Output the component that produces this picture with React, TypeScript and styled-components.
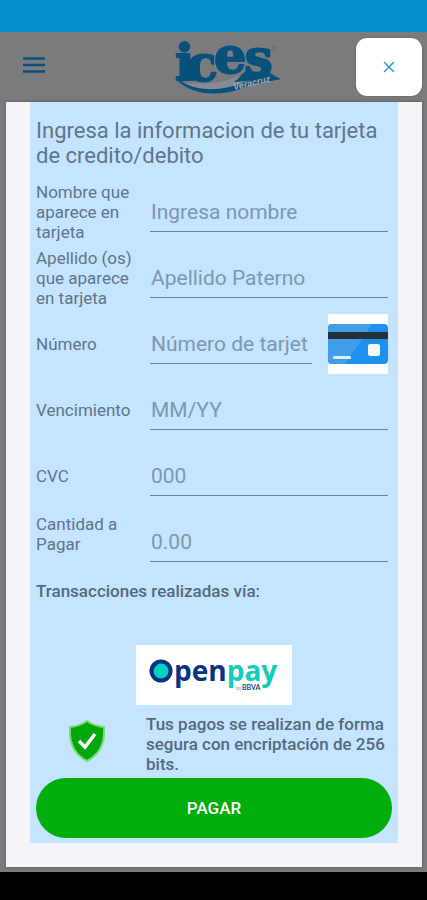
import React from "react";
import styled, { createGlobalStyle } from "styled-components";

const GlobalStyle = createGlobalStyle`
  * { box-sizing: border-box; }
  body { margin: 0; background: #000; font-family: Roboto, "Liberation Sans", sans-serif; }
`;

const Screen = styled.div`
  min-height: 100vh;
  display: flex;
  flex-direction: column;
`;

const StatusBar = styled.div`
  height: 32px;
  background: #048ccb;
`;

const Backdrop = styled.main`
  flex: 1;
  background: #7b7b7d;
  padding: 0 5px 5px 6px;
`;

const Header = styled.header`
  height: 70px;
  display: grid;
  grid-template-columns: 1fr auto 1fr;
  align-items: center;
`;

const MenuButton = styled.button`
  justify-self: start;
  margin: 0 0 4px 13px;
  padding: 4px;
  border: 0;
  background: none;
  display: flex;
`;

const Brand = styled.div`
  padding-left: 28px;
  display: flex;
`;

const CloseButton = styled.button`
  justify-self: end;
  width: 66px;
  height: 58px;
  padding: 0;
  border: 0;
  border-radius: 11px;
  background: #fff;
  box-shadow: 0 0 2px #555;
  display: flex;
  align-items: center;
  justify-content: center;
`;

const Modal = styled.section`
  padding: 0 24px 24px;
  background: #f4f4f9;
  box-shadow: 0 0 3px #555;
`;

const Form = styled.form`
  padding: 16px 6px 5px;
  background: #c5e4ff;
  color: #5f7588;
`;

const Title = styled.h1`
  margin: 0 0 11px;
  font-size: 22px;
  line-height: 25px;
  font-weight: 400;
`;

const Row = styled.div`
  min-height: 66px;
  padding-right: 4px;
  display: grid;
  grid-template-columns: 114px 1fr auto;
  align-items: center;
`;

const Label = styled.label<{ $top?: boolean }>`
  padding: ${(p) => (p.$top ? "5px 16px 0 0" : "0 16px 0 0")};
  align-self: ${(p) => (p.$top ? "start" : "center")};
  font-size: 17px;
  line-height: 20px;
`;

const Input = styled.input`
  width: 100%;
  min-width: 0;
  height: 40px;
  padding: 1px 0 0 1px;
  border: 0;
  border-bottom: 1px solid #6d8495;
  border-radius: 0;
  outline: 0;
  background: transparent;
  color: #455a6b;
  font: 400 21px Roboto, "Liberation Sans", sans-serif;
  &::placeholder { color: #7d97ac; opacity: 1; }
`;

const CardPicture = styled.div`
  margin-left: 16px;
  width: 60px;
  height: 60px;
  background: #fff;
  display: flex;
  align-items: center;
`;

const Note = styled.p`
  margin: 0;
  font-size: 17px;
  line-height: 20px;
  font-weight: 500;
  color: #536a7c;
`;

const Transactions = styled.div`
  padding-top: 6px;
`;

const Provider = styled.div`
  width: 156px;
  height: 60px;
  margin: 44px auto 9px;
  background: #fff;
`;

const Security = styled.div`
  display: grid;
  grid-template-columns: 102px 1fr;
  column-gap: 8px;
  align-items: center;
  margin-bottom: 4px;
`;

const Shield = styled.div`
  display: flex;
  justify-content: center;
  padding-bottom: 6px;
`;

const PayButton = styled.button`
  width: 100%;
  height: 60px;
  border: 0;
  border-radius: 30px;
  background: #02ae0e;
  color: #fff;
  font: 500 17px Roboto, "Liberation Sans", sans-serif;
`;

const NavigationBar = styled.div`
  height: 28px;
  background: #000;
`;

function IcesLogo() {
  return (
    <svg width="108" height="60" viewBox="0 0 108 60" overflow="visible" role="img" aria-label="ices Veracruz">
      <path d="M2 42C16 58 44 60 66 52C82 46 92 45 107 42C98 37 89 36 82 37L72 34L62 42C48 50 24 52 2 42Z" fill="#07517b" />
      <path d="M8 45C26 48 47 47 62 40C78 37 88 42 70 45C50 54 26 55 8 45Z" fill="#838c94" />
      <path d="M60 45L72 35L81 39L96 36L106 42L82 43Z" fill="#07517b" />
      <text x="1 13 40 70" y="43 44 36 38" fontSize="51" fill="#07517b" fontFamily="DejaVu Serif" fontWeight="700" stroke="#07517b" strokeWidth="2" strokeLinejoin="round">ices</text>
      <path d="M43 12C39 20 40 32 46 39M73 13C71 17 71 22 73 25" fill="none" stroke="#7b8790" strokeWidth="1" />
      <text x="60" y="53" transform="rotate(-13 60 53)" fontFamily="Liberation Sans" fontStyle="italic" fontWeight="700" fontSize="9" fill="#a3a8ad">Veracruz</text>
      <text x="98" y="13" fontFamily="Liberation Sans" fontSize="6" fill="#51616e">®</text>
    </svg>
  );
}

function CardIcon() {
  return (
    <svg width="60" height="40" viewBox="0 0 60 40" aria-hidden="true">
      <rect width="60" height="40" rx="4" fill="#1e90ef" />
      <path d="M4 0H44L17 40H4Q0 40 0 36V4Q0 0 4 0Z" fill="#429deb" />
      <path d="M0 8H60V15H0Z" fill="#263137" />
      <rect x="40" y="20" width="12" height="12" rx="2" fill="#f4f7f9" />
      <rect x="5" y="32" width="18" height="3" rx="1" fill="#dcedfb" />
    </svg>
  );
}

function OpenpayLogo() {
  return (
    <svg width="156" height="60" viewBox="0 0 156 60" role="img" aria-label="Openpay by BBVA">
      <circle cx="25" cy="26" r="9.5" fill="#05cec4" stroke="#073481" strokeWidth="4" />
      <path d="M16 20Q19 15 25 16L18 23Z" fill="#073481" />
      <text x="38" y="36" fontFamily="Open Sans" fontSize="28" fontWeight="700" fill="#073481">
        pen<tspan fill="#13cdb8">pay</tspan>
      </text>
      <text x="100" y="45" fontFamily="Lato" fontSize="5" fill="#8390ac">by</text>
      <text x="106" y="45" fontFamily="Lato" fontSize="7" fontWeight="700" fill="#234778">BBVA</text>
    </svg>
  );
}

function ShieldIcon() {
  return (
    <svg width="36" height="42" viewBox="0 0 36 42" aria-hidden="true">
      <path d="M18 1Q25 6 35 7Q37 31 18 41Q-1 31 1 7Q11 6 18 1Z" fill="#02a80b" stroke="#83d878" strokeWidth="2" />
      <path d="M10 21L16 27L26 14" fill="none" stroke="#fff" strokeWidth="3.5" />
    </svg>
  );
}

type FieldProps = {
  id: string;
  label: string;
  placeholder: string;
  top?: boolean;
  children?: React.ReactNode;
};

function Field({ id, label, placeholder, top, children }: FieldProps) {
  return (
    <Row>
      <Label htmlFor={id} $top={top}>{label}</Label>
      <Input id={id} placeholder={placeholder} />
      {children}
    </Row>
  );
}

export default function App() {
  return (
    <Screen>
      <GlobalStyle />
      <StatusBar />
      <Backdrop>
        <Header>
          <MenuButton type="button" aria-label="Menú">
            <svg width="22" height="16" viewBox="0 0 22 16" aria-hidden="true">
              <path d="M0 1.5H22M0 8H22M0 14.5H22" stroke="#07517b" strokeWidth="2.4" />
            </svg>
          </MenuButton>
          <Brand><IcesLogo /></Brand>
          <CloseButton type="button" aria-label="Cerrar">
            <svg width="12" height="12" viewBox="0 0 12 12" aria-hidden="true">
              <path d="M1 1L11 11M11 1L1 11" stroke="#2492ce" strokeWidth="1.4" />
            </svg>
          </CloseButton>
        </Header>
        <Modal role="dialog" aria-label="Pago con tarjeta">
          <Form onSubmit={(e) => e.preventDefault()}>
            <Title>Ingresa la informacion de tu tarjeta de credito/debito</Title>
            <Field id="nombre" label="Nombre que aparece en tarjeta" placeholder="Ingresa nombre" />
            <Field id="apellido" label="Apellido (os) que aparece en tarjeta" placeholder="Apellido Paterno" />
            <Field id="numero" label="Número" placeholder="Número de tarjet">
              <CardPicture><CardIcon /></CardPicture>
            </Field>
            <Field id="vencimiento" label="Vencimiento" placeholder="MM/YY" />
            <Field id="cvc" label="CVC" placeholder="000" />
            <Field id="cantidad" label="Cantidad a Pagar" placeholder="0.00" top />
            <Transactions>
              <Note>Transacciones realizadas vía:</Note>
              <Provider><OpenpayLogo /></Provider>
            </Transactions>
            <Security>
              <Shield><ShieldIcon /></Shield>
              <Note>Tus pagos se realizan de forma segura con encriptación de 256 bits.</Note>
            </Security>
            <PayButton type="submit">PAGAR</PayButton>
          </Form>
        </Modal>
      </Backdrop>
      <NavigationBar />
    </Screen>
  );
}
